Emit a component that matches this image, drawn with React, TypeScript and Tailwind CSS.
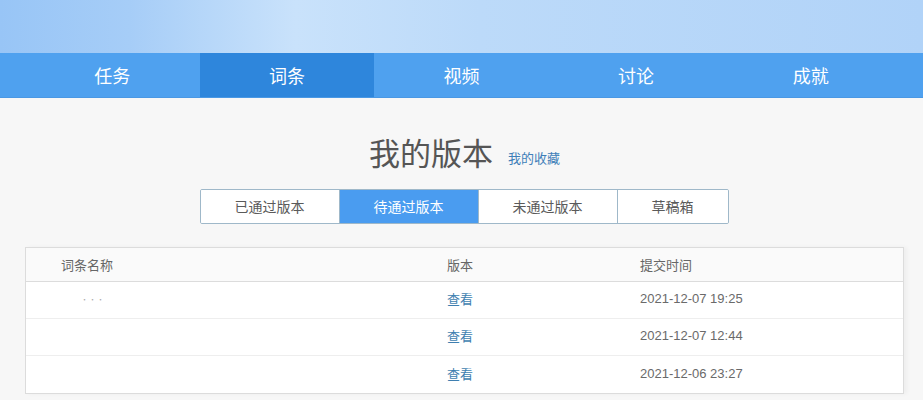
import React from "react";

const font = { fontFamily: '"Noto Sans CJK SC", "Noto Sans", sans-serif' };

export default function App() {
  const navs = ["任务", "词条", "视频", "讨论", "成就"];
  const segs = ["已通过版本", "待通过版本", "未通过版本", "草稿箱"];
  const rows = [
    { name: "···", date: "2021-12-07 19:25" },
    { name: "", date: "2021-12-07 12:44" },
    { name: "", date: "2021-12-06 23:27" },
  ];
  return (
    <div className="w-[923px] h-[400px] overflow-hidden bg-[#f7f7f7]" style={font}>
      <div className="h-[53px] bg-[linear-gradient(90deg,#98c5f6_0%,#a6cdf7_14%,#c9e2fb_32%,#bcdaf9_52%,#b1d3f8_100%)]" />
      <div className="h-[45px] bg-[#4fa1ef] border-b border-[#4a98e4]">
        <div className="mx-[25px] grid grid-cols-5 h-full">
          {navs.map((n, i) => (
            <div
              key={n}
              className={`flex items-center justify-center text-[18px] text-white ${i === 1 ? "bg-[#2e86dc]" : ""}`}
            >
              {n}
            </div>
          ))}
        </div>
      </div>
      <div className="flex flex-col items-center pt-[34px]">
        <div className="flex items-end h-[40px] ml-[6px]">
          <span className="text-[31px] leading-[40px] text-[#555]">我的版本</span>
          <span className="ml-[15px] mb-[5px] text-[13px] text-[#3f7fb9]">我的收藏</span>
        </div>
        <div className="mt-[17px] flex h-[35px] border border-[#9fb8c9] rounded-[2px] overflow-hidden ml-[5px]">
          {segs.map((s, i) => (
            <div
              key={s}
              className={`flex items-center justify-center px-[34px] text-[14px] ${i > 0 ? "border-l border-[#9fb8c9]" : ""} ${i === 1 ? "bg-[#4a9cf0] text-white" : "bg-white text-[#5a5a5a]"}`}
            >
              {s}
            </div>
          ))}
        </div>
      </div>
      <div className="mt-[23px] mx-[25px] w-[879px] border border-[#dcdcdc] bg-white shadow-[3px_0_4px_rgba(0,0,0,0.04)]">
        <div className="grid grid-cols-[421px_193px_1fr] h-[34px] items-center bg-[#fafafa] border-b border-[#dcdcdc] text-[13px] text-[#666]">
          <div className="pl-[35px]">词条名称</div>
          <div>版本</div>
          <div>提交时间</div>
        </div>
        {rows.map((r, i) => (
          <div
            key={i}
            className={`grid grid-cols-[421px_193px_1fr] h-[37px] pb-[2px] items-center text-[13px] ${i < rows.length - 1 ? "border-b border-[#eeeeee]" : ""}`}
          >
            <div className="pl-[55px] text-[7px] tracking-[1px] text-[#aaa]">{r.name}</div>
            <div className="text-[#3f7fb0]">查看</div>
            <div className="text-[#6a6a6a]" style={{ fontFamily: '"Liberation Sans", Arial, sans-serif' }}>{r.date}</div>
          </div>
        ))}
      </div>
    </div>
  );
}
